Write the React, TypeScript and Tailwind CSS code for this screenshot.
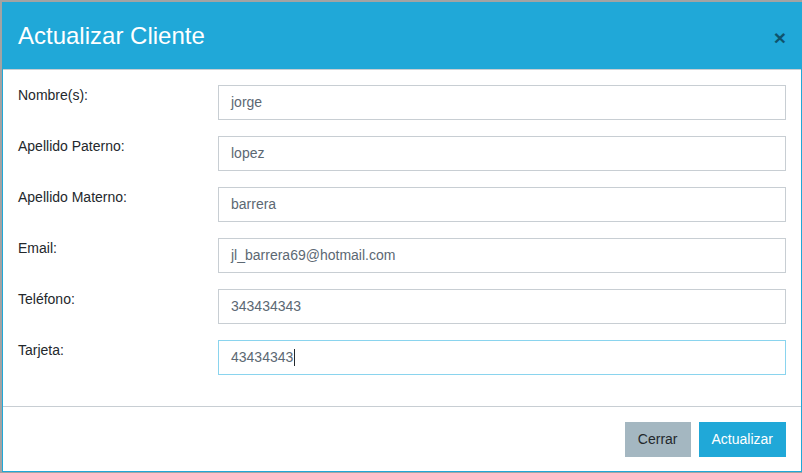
const fields = [
  { label: "Nombre(s):", value: "jorge" },
  { label: "Apellido Paterno:", value: "lopez" },
  { label: "Apellido Materno:", value: "barrera" },
  { label: "Email:", value: "jl_barrera69@hotmail.com" },
  { label: "Teléfono:", value: "343434343" },
  { label: "Tarjeta:", value: "43434343", focused: true },
]

export default function App() {
  return (
    <div className="h-[473px] w-[802px] overflow-hidden bg-[#a3a3a3] pt-[2px] pl-[2px] font-['Liberation_Sans',Arial,sans-serif]">
      <div className="flex h-[470px] w-[800px] flex-col border border-[#20a8d8] bg-white">
        {/* header */}
        <div className="flex h-[66px] shrink-0 items-center justify-between bg-[#20a8d8] pl-[15px] pr-[15px]">
          <h5 className="text-[24px] leading-[36px] text-white">Actualizar Cliente</h5>
          <button className="mt-[2px] text-[21px] font-bold leading-none text-black opacity-50">×</button>
        </div>
        <div className="h-px bg-[#c8ced3]" />

        {/* body */}
        <div className="flex h-[336px] shrink-0 flex-col gap-4 pt-[15px] pl-[15px] pr-[15px]">
          {fields.map((f) => (
            <div key={f.label} className="flex items-start">
              <label className="w-[200px] shrink-0 text-[14px] leading-[21px] text-[#23282c]">{f.label}</label>
              <div
                className={
                  "flex h-[35px] flex-1 items-center border px-3 text-[14px] text-[#5c6873] " +
                  (f.focused ? "border-[#8ad4ee]" : "border-[#c8ced3]")
                }
              >
                <span>{f.value}</span>
                {f.focused && <span className="ml-px inline-block h-[17px] w-px bg-[#23282c]" />}
              </div>
            </div>
          ))}
        </div>

        {/* footer */}
        <div className="h-px bg-[#c8ced3]" />
        <div className="flex flex-1 items-start justify-end gap-2 pt-[15px] pr-[15px]">
          <button className="h-[35px] bg-[#a4b7c1] px-[13px] text-[14px] text-[#23282c]">Cerrar</button>
          <button className="h-[35px] bg-[#20a8d8] px-[13px] text-[14px] text-white">Actualizar</button>
        </div>
      </div>
    </div>
  )
}
